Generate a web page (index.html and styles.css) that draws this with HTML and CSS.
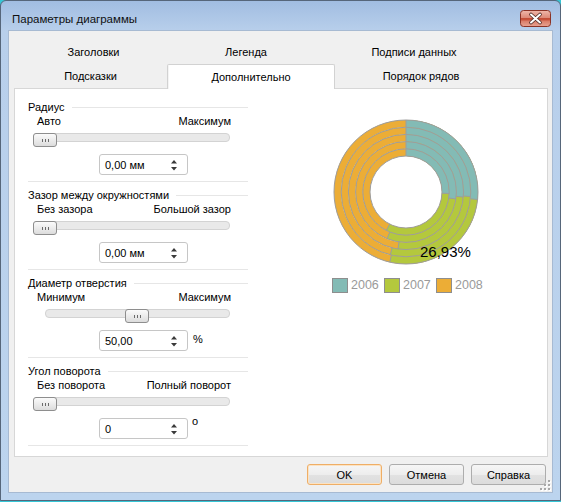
FILE: index.html
```html
<!DOCTYPE html>
<html lang="ru">
<head>
<meta charset="utf-8">
<title>Параметры диаграммы</title>
<link rel="stylesheet" href="styles.css">
</head>
<body>
<div class="window">
  <div class="titlebar">
    <span class="title">Параметры диаграммы</span>
    <span class="close">
      <svg width="31" height="17" viewBox="0 0 31 17">
        <defs>
          <linearGradient id="cg" x1="0" y1="0" x2="0" y2="1">
            <stop offset="0" stop-color="#efb8ab"/>
            <stop offset="0.45" stop-color="#dd8a78"/>
            <stop offset="0.46" stop-color="#c24b34"/>
            <stop offset="0.62" stop-color="#c9563f"/>
            <stop offset="0.63" stop-color="#d87a66"/>
            <stop offset="1" stop-color="#e8a493"/>
          </linearGradient>
        </defs>
        <rect x="0.5" y="0.5" width="30" height="16" rx="3" fill="url(#cg)" stroke="#8a3326"/>
        <path d="M11 4.5 L20 12.5 M20 4.5 L11 12.5" stroke="#4d2a24" stroke-width="3.6" stroke-linecap="round"/>
        <path d="M11 4.5 L20 12.5 M20 4.5 L11 12.5" stroke="#ffffff" stroke-width="2" stroke-linecap="round"/>
      </svg>
    </span>
  </div>
  <div class="client">
    <div class="tabs">
      <div class="tab-row r1">
        <div class="tab">Заголовки</div>
        <div class="tab">Легенда</div>
        <div class="tab">Подписи данных</div>
      </div>
      <div class="tab-row r2">
        <div class="tab">Подсказки</div>
        <div class="tab active">Дополнительно</div>
        <div class="tab">Порядок рядов</div>
      </div>
    </div>
    <div class="panel">
      <div class="settings">
        <section class="group">
          <div class="group-head"><span>Радиус</span><i class="rule"></i></div>
          <div class="range-labels"><span>Авто</span><span>Максимум</span></div>
          <div class="slider"><div class="track"></div><div class="thumb" style="left:0px"><i class="grip"></i></div></div>
          <div class="spin-row">
            <div class="spin"><span>0,00 мм</span><svg class="arrows" width="6" height="14" viewBox="0 0 6 14"><path d="M0 5.5 L3 2 L6 5.5 Z M0 9 L3 12.5 L6 9 Z" fill="#3a3a3a"/></svg></div>
          </div>
          <hr class="sep">
        </section>
        <section class="group">
          <div class="group-head"><span>Зазор между окружностями</span><i class="rule"></i></div>
          <div class="range-labels"><span>Без зазора</span><span>Большой зазор</span></div>
          <div class="slider"><div class="track"></div><div class="thumb" style="left:0px"><i class="grip"></i></div></div>
          <div class="spin-row">
            <div class="spin"><span>0,00 мм</span><svg class="arrows" width="6" height="14" viewBox="0 0 6 14"><path d="M0 5.5 L3 2 L6 5.5 Z M0 9 L3 12.5 L6 9 Z" fill="#3a3a3a"/></svg></div>
          </div>
          <hr class="sep">
        </section>
        <section class="group">
          <div class="group-head"><span>Диаметр отверстия</span><i class="rule"></i></div>
          <div class="range-labels"><span>Минимум</span><span>Максимум</span></div>
          <div class="slider narrow"><div class="track"></div><div class="thumb" style="left:80px"><i class="grip"></i></div></div>
          <div class="spin-row">
            <div class="spin"><span>50,00</span><svg class="arrows" width="6" height="14" viewBox="0 0 6 14"><path d="M0 5.5 L3 2 L6 5.5 Z M0 9 L3 12.5 L6 9 Z" fill="#3a3a3a"/></svg></div>
            <span class="unit pct">%</span>
          </div>
          <hr class="sep">
        </section>
        <section class="group">
          <div class="group-head"><span>Угол поворота</span><i class="rule"></i></div>
          <div class="range-labels"><span>Без поворота</span><span>Полный поворот</span></div>
          <div class="slider"><div class="track"></div><div class="thumb" style="left:0px"><i class="grip"></i></div></div>
          <div class="spin-row">
            <div class="spin"><span>0</span><svg class="arrows" width="6" height="14" viewBox="0 0 6 14"><path d="M0 5.5 L3 2 L6 5.5 Z M0 9 L3 12.5 L6 9 Z" fill="#3a3a3a"/></svg></div>
            <span class="unit deg">o</span>
          </div>
          <hr class="sep">
        </section>
      </div>
      <div class="chart">
        <svg class="donut" width="160" height="160" viewBox="0 0 160 160">
          <g transform="rotate(-90 80 80)" fill="none" stroke-width="7.2">
            <circle cx="80" cy="80" r="39.6" stroke="#ecad36"/>
            <circle cx="80" cy="80" r="39.6" stroke="#b4c83d" stroke-dasharray="143.07 1000"/>
            <circle cx="80" cy="80" r="39.6" stroke="#83bbb5" stroke-dasharray="63.59 1000"/>
            <circle cx="80" cy="80" r="46.8" stroke="#ecad36"/>
            <circle cx="80" cy="80" r="46.8" stroke="#b4c83d" stroke-dasharray="165.0 1000"/>
            <circle cx="80" cy="80" r="46.8" stroke="#83bbb5" stroke-dasharray="80.05 1000"/>
            <circle cx="80" cy="80" r="54" stroke="#ecad36"/>
            <circle cx="80" cy="80" r="54" stroke="#b4c83d" stroke-dasharray="177.19 1000"/>
            <circle cx="80" cy="80" r="54" stroke="#83bbb5" stroke-dasharray="89.54 1000"/>
            <circle cx="80" cy="80" r="61.2" stroke="#ecad36"/>
            <circle cx="80" cy="80" r="61.2" stroke="#b4c83d" stroke-dasharray="207.22 1000"/>
            <circle cx="80" cy="80" r="61.2" stroke="#83bbb5" stroke-dasharray="100.41 1000"/>
            <circle cx="80" cy="80" r="68.4" stroke="#ecad36"/>
            <circle cx="80" cy="80" r="68.4" stroke="#b4c83d" stroke-dasharray="230.41 1000"/>
            <circle cx="80" cy="80" r="68.4" stroke="#83bbb5" stroke-dasharray="114.61 1000"/>
          </g>
          <g fill="none" stroke="#9d9d9d" stroke-width="1">
            <circle cx="80" cy="80" r="36"/>
            <circle cx="80" cy="80" r="43.2"/>
            <circle cx="80" cy="80" r="50.4"/>
            <circle cx="80" cy="80" r="57.6"/>
            <circle cx="80" cy="80" r="64.8"/>
            <circle cx="80" cy="80" r="72"/>
            <path d="M80 44 L80 8"/>
            <path d="M115.98 81.26 L123.17 81.51"/>
            <path d="M122.78 86.01 L129.91 87.01"/>
            <path d="M130.21 84.39 L137.38 85.02"/>
            <path d="M137.46 84.02 L144.64 84.52"/>
            <path d="M144.44 86.77 L151.61 87.53"/>
            <path d="M63.66 112.08 L60.39 118.49"/>
            <path d="M63.82 120.05 L61.12 126.73"/>
            <path d="M72.99 129.91 L71.98 137.04"/>
            <path d="M66.07 135.89 L64.32 142.88"/>
            <path d="M65.42 143.14 L63.80 150.15"/>
          </g>
          <text class="value" x="94" y="144.5">26,93%</text>
        </svg>
        <div class="legend">
          <div class="item"><i class="swatch s2006"></i><span>2006</span></div>
          <div class="item"><i class="swatch s2007"></i><span>2007</span></div>
          <div class="item"><i class="swatch s2008"></i><span>2008</span></div>
        </div>
      </div>
    </div>
    <div class="buttons">
      <button class="btn default">OK</button>
      <button class="btn">Отмена</button>
      <button class="btn">Справка</button>
    </div>
    <svg class="grip-corner" width="12" height="12" viewBox="0 0 12 12">
      <g fill="#ffffff"><rect x="10" y="2" width="2" height="2"/><rect x="10" y="6" width="2" height="2"/><rect x="6" y="6" width="2" height="2"/><rect x="10" y="10" width="2" height="2"/><rect x="6" y="10" width="2" height="2"/><rect x="2" y="10" width="2" height="2"/></g>
      <g fill="#a8a8a8"><rect x="9" y="1" width="2" height="2"/><rect x="9" y="5" width="2" height="2"/><rect x="5" y="5" width="2" height="2"/><rect x="9" y="9" width="2" height="2"/><rect x="5" y="9" width="2" height="2"/><rect x="1" y="9" width="2" height="2"/></g>
    </svg>
  </div>
</div>
</body>
</html>
```

FILE: styles.css
```css
* { box-sizing: border-box; }
html, body { margin: 0; padding: 0; }
body {
  width: 561px;
  height: 502px;
  overflow: hidden;
  background: #35c6d6;
  font-family: "Liberation Sans", Arial, sans-serif;
  font-size: 11px;
  color: #000;
}
.window {
  width: 561px;
  height: 501px;
  border: 1px solid #56667a;
  border-radius: 6px 6px 0 0;
  background: linear-gradient(to bottom, #a1bde1 0px, #b8cfeb 30px, #bcd4ee 100%);
  display: flex;
  flex-direction: column;
}
.titlebar {
  height: 29px;
  display: flex;
  justify-content: space-between;
  align-items: flex-start;
  padding: 0 9px 0 11px;
}
.title {
  margin-top: 11px;
  line-height: 14px;
  font-size: 11.5px;
  color: #101010;
}
.close { margin-top: 9px; display: block; line-height: 0; }
.client {
  position: relative;
  margin: 0 7px;
  height: 463px;
  background: #f0f0f0;
  border: 1px solid #a7bad2;
  padding: 9px 4px 0 5px;
}
.tab-row {
  display: grid;
  height: 24px;
}
.tab-row.r1 { grid-template-columns: 159px 146px 190px; }
.tab-row.r2 { grid-template-columns: 153px 168px 172px; }
.tab {
  display: flex;
  align-items: center;
  justify-content: center;
  height: 24px;
}
.tab.active {
  position: relative;
  z-index: 1;
  height: 25px;
  background: #fff;
  border: 1px solid #d2d2d2;
  border-bottom: none;
  border-radius: 2px 2px 0 0;
  box-shadow: inset 1px 0 0 #f4f4f4;
}
.panel {
  height: 369px;
  background: #fff;
  border: 1px solid #d7d7d7;
  display: flex;
  padding: 11px 0 0 13px;
}
.settings { width: 220px; }
.group-head {
  height: 14px;
  display: flex;
  align-items: center;
  line-height: 14px;
}
.rule {
  flex: 1;
  height: 1px;
  margin-left: 7px;
  background: #e6e6e6;
}
.range-labels {
  height: 14px;
  line-height: 14px;
  display: flex;
  justify-content: space-between;
  padding: 0 17px 0 9px;
}
.slider {
  position: relative;
  height: 16px;
  margin: 5px 0 0 5px;
  width: 197px;
}
.slider.narrow { margin-left: 17px; width: 185px; }
.track {
  margin-top: 3px;
  height: 9px;
  border: 1px solid #d3d3d3;
  border-radius: 4px;
  background: #e9e9e9;
}
.thumb {
  position: absolute;
  top: 0;
  width: 24px;
  height: 14px;
  border: 1px solid #8e8e8e;
  border-radius: 3px;
  background: linear-gradient(to bottom, #fbfbfb 0%, #ececec 50%, #dcdcdc 100%);
  display: flex;
  align-items: center;
  justify-content: center;
}
.grip {
  width: 7px;
  height: 3px;
  background: linear-gradient(to right, #6a6a6a 1px, transparent 1px) 0 0 / 3px 100% repeat-x;
}
.spin-row {
  display: flex;
  margin: 5px 0 0 71px;
  height: 21px;
}
.spin {
  width: 89px;
  height: 21px;
  border: 1px solid #c6c6c6;
  border-radius: 3px;
  background: #fff;
  display: flex;
  align-items: center;
  justify-content: space-between;
  padding: 0 10px 0 5px;
}
.arrows { display: block; }
.unit { line-height: 14px; margin-left: 5px; }
.unit.pct { margin-top: 2px; }
.unit.deg { margin-top: -4px; margin-left: 4px; }
.sep {
  margin: 6px 0 6px 0;
  border: none;
  height: 1px;
  background: #e6e6e6;
}
.chart {
  padding: 12px 0 0 78px;
}
.donut { display: block; }
.value {
  font-family: "Liberation Sans", Arial, sans-serif;
  font-size: 15px;
  fill: #000;
}
.legend {
  display: flex;
  margin: 6px 0 0 6px;
}
.item {
  width: 52px;
  display: flex;
  align-items: center;
  gap: 3px;
  color: #9a9a9a;
  font-size: 12.5px;
  line-height: 15px;
}
.swatch {
  width: 16px;
  height: 15px;
  border: 1px solid #8e8e8e;
}
.s2006 { background: #83bbb5; }
.s2007 { background: #b4c83d; }
.s2008 { background: #ecad36; }
.buttons {
  display: flex;
  justify-content: flex-end;
  gap: 7px;
  margin-top: 7px;
  padding-right: 2px;
}
.btn {
  width: 75px;
  height: 21px;
  padding: 0;
  font-family: "Liberation Sans", Arial, sans-serif;
  font-size: 11px;
  color: #000;
  border: 1px solid #adadad;
  border-radius: 3px;
  background: linear-gradient(to bottom, #f6f6f6 0%, #ededed 50%, #e2e2e2 51%, #dcdcdc 100%);
}
.btn.default {
  border-color: #efae66;
  box-shadow: inset 0 0 0 1px #fbe3c4;
}
.grip-corner {
  position: absolute;
  right: 1px;
  bottom: 1px;
}
```
